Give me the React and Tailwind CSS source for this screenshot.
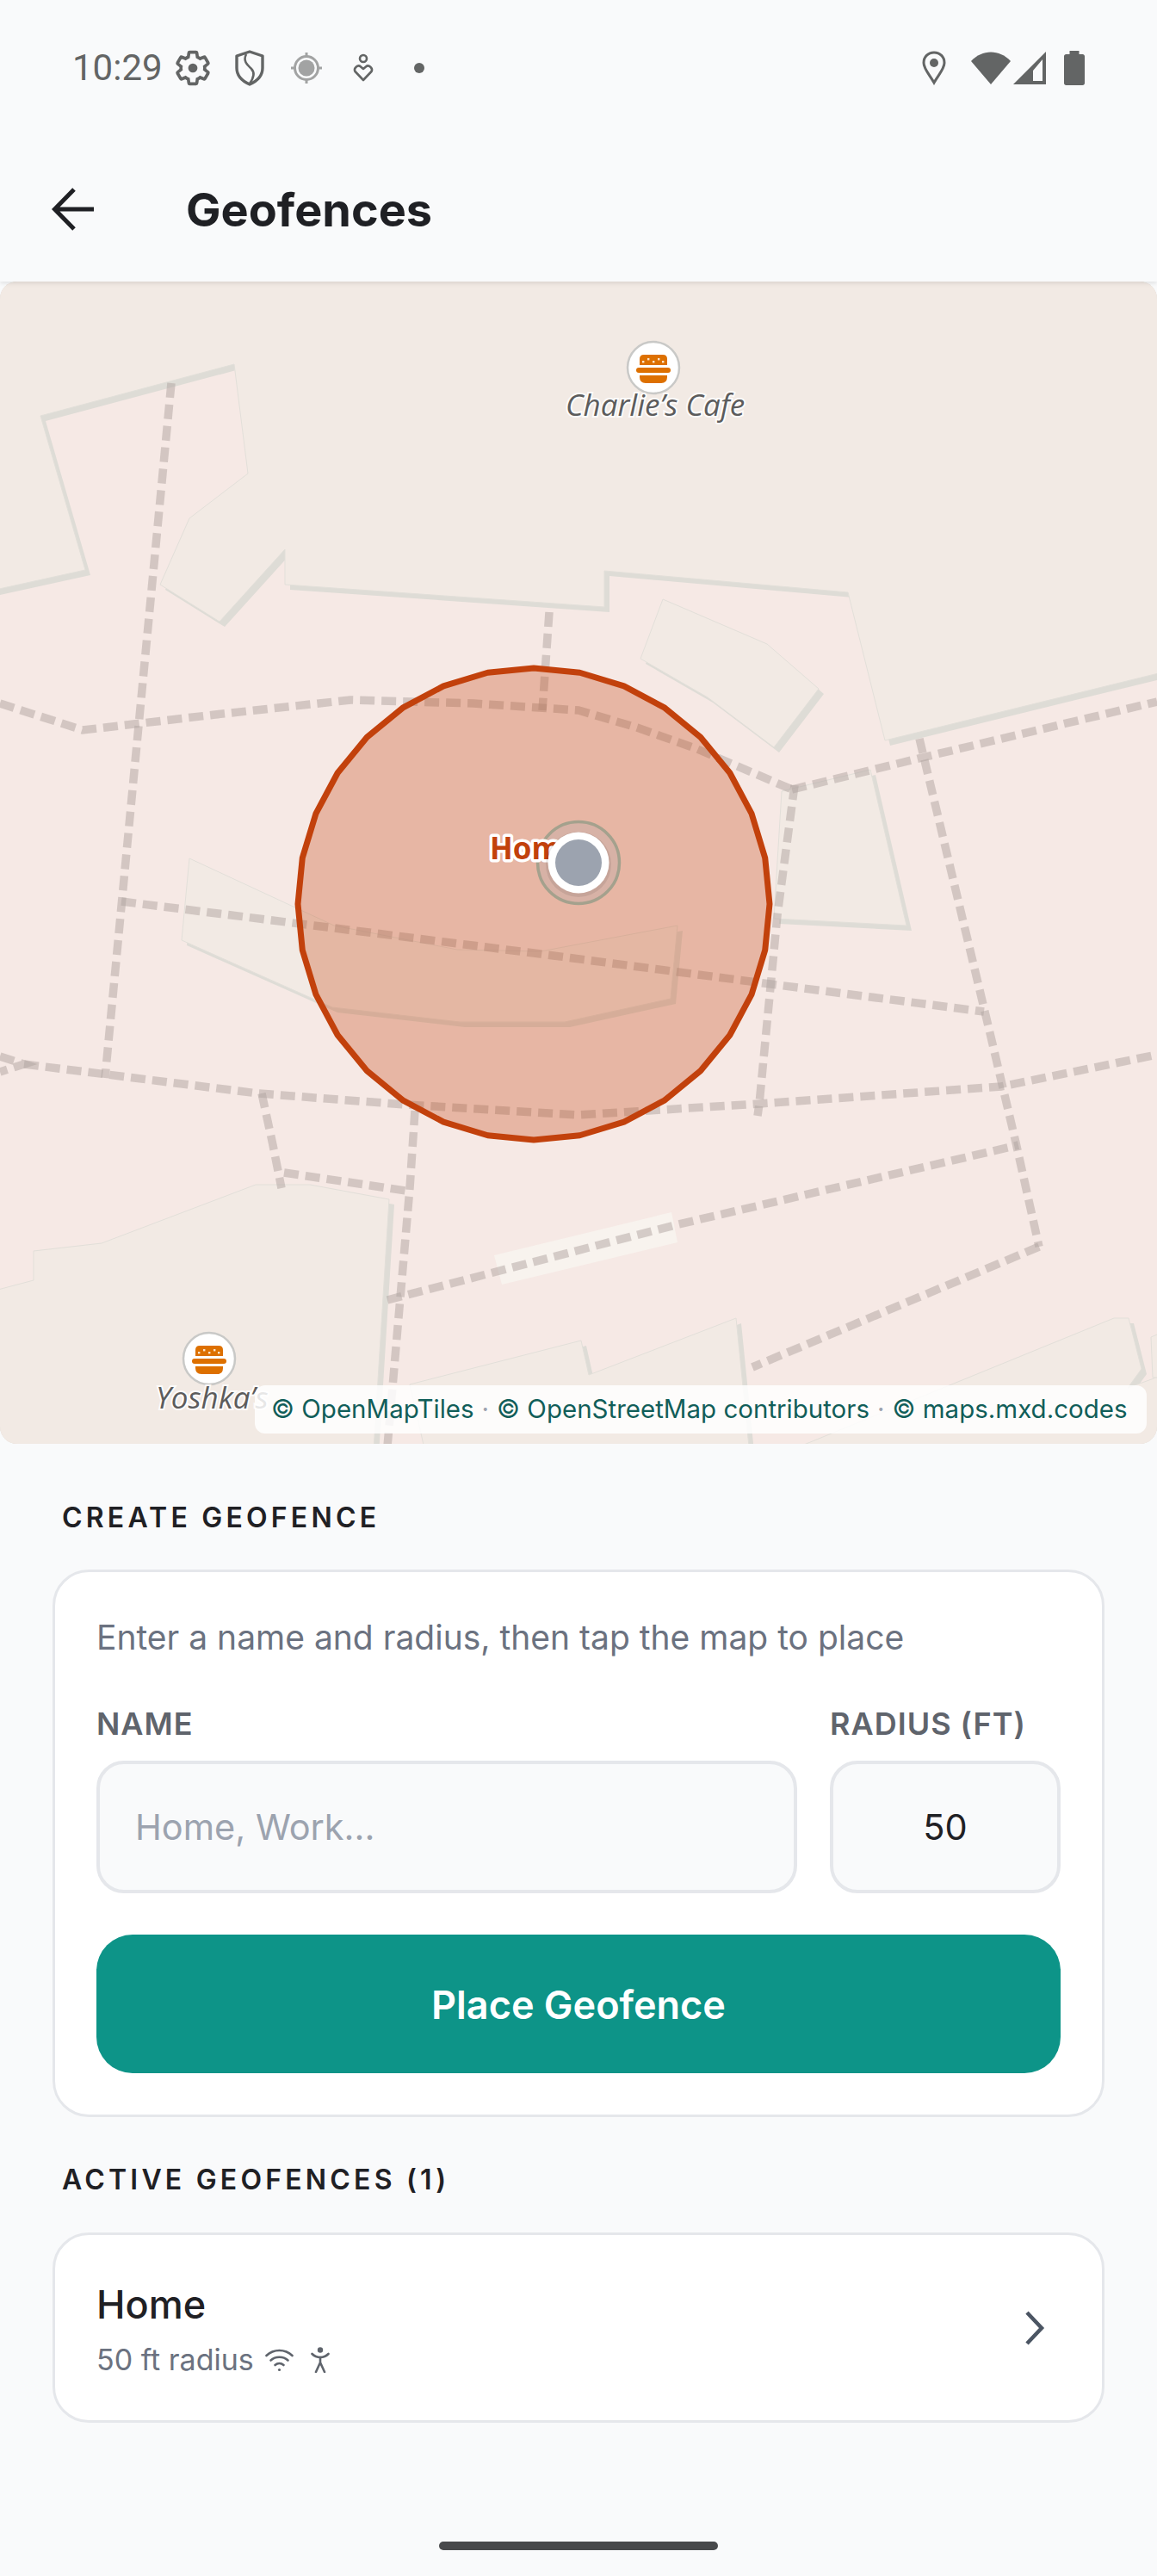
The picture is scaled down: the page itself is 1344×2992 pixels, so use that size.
import React from 'react';

// map shapes, in page pixels (the svg viewBox starts at the top of the map)
const landShapes = [
  '-10,317 1354,317 1354,780 1028,860 985,688 702,663 702,705 331,679 331,638 255,722 186,679 220,602 288,550 272,423 47,483 99,662 -10,686',
  '770,696 891,748 951,800 899,868 822,810 744,765',
  '908,919 1011,894 1053,1075 899,1067',
  '220,997 388,1075 531,1103 628,1105 787,1075 779,1160 656,1187 534,1187 386,1170 211,1092',
  '-10,1500 39,1487 39,1453 118,1444 297,1376 360,1376 452,1393 433,1700 -10,1700',
  '476,1608 675,1557 684,1597 855,1531 872,1700 497,1700',
  '880,1700 1294,1531 1311,1531 1326,1590 1310,1612 1354,1596 1354,1700',
  '1354,1546 1337,1553 1339,1600 1354,1600',
];

const roads = [
  '199,445 161,843 122,1252',
  '0,817 96,848 250,830 407,813 550,817 672,825 740,845 810,870 920,917',
  '920,917 1071,880 1344,815',
  '923,912 903,1063 882,1282 880,1296',
  '1068,858 1150,1200 1180,1327 1207,1448',
  '141,1047 628,1108 895,1143 1143,1175',
  '28,1236 300,1270 471,1283 672,1295 882,1282 1163,1262 1344,1225',
  '0,1227 28,1236 0,1245',
  '304,1270 317,1330 327,1380',
  '330,1362 471,1383',
  '482,1290 476,1380 450,1680',
  '450,1510 784,1423 1183,1330',
  '1207,1448 874,1588',
  '638,711 630,825',
];

const fencePoints = Array.from({ length: 32 }, (_, i) => {
  const a = (i * Math.PI) / 16;
  return `${620 + 274 * Math.sin(a)},${1050 - 274 * Math.cos(a)}`;
}).join(' ');

const Burger = ({ x, y }) => (
  <g transform={`translate(${x} ${y})`}>
    <circle r="30" fill="#fff" stroke="#c9c9c7" strokeWidth="2.5" />
    <path d="M-16 -3V-10Q-16 -15 -11 -15H11Q16 -15 16 -10V-3Z" fill="#dd7000" />
    <rect x="-20" y="0" width="40" height="6" rx="3" fill="#dd7000" />
    <path d="M-16 9H16V11Q16 18 9 18H-9Q-16 18 -16 11Z" fill="#dd7000" />
    <rect x="-13" y="-8" width="2.4" height="2.4" fill="#fbe3c8" />
    <rect x="-7" y="-11" width="2.4" height="2.4" fill="#fbe3c8" />
    <rect x="-1" y="-8" width="2.4" height="2.4" fill="#fbe3c8" />
    <rect x="5" y="-11" width="2.4" height="2.4" fill="#fbe3c8" />
    <rect x="10" y="-8" width="2.4" height="2.4" fill="#fbe3c8" />
  </g>
);

const MapLabel = ({ x, y, children }) => (
  <text
    x={x}
    y={y}
    fontFamily="'Open Sans', sans-serif"
    fontStyle="italic"
    fontSize="35"
    fill="#5c5c5c"
    stroke="#fff"
    strokeOpacity="0.85"
    strokeWidth="4"
    paintOrder="stroke"
  >
    {children}
  </text>
);

const MapView = () => (
  <div className="relative h-[1350px] overflow-hidden rounded-[20px] bg-[#f6e9e5]">
    <svg className="block h-[1350px] w-[1344px]" viewBox="0 327 1344 1350">
      <g fill="#dedcd6" transform="translate(6 6)">
        {landShapes.map((p) => (
          <polygon key={p} points={p} />
        ))}
      </g>
      <g fill="#f2eae4" stroke="#e2dfd9" strokeWidth="1">
        {landShapes.map((p) => (
          <polygon key={p} points={p} />
        ))}
      </g>
      <polygon points="574,1458 780,1408 787,1443 583,1492" fill="#f8f3ee" />
      <g fill="none" stroke="#b0a39f" strokeOpacity="0.5" strokeWidth="9.5" strokeDasharray="17 8">
        {roads.map((p) => (
          <polyline key={p} points={p} />
        ))}
      </g>

      <polygon points={fencePoints} fill="#c2410c" fillOpacity="0.3" stroke="#c2410c" strokeWidth="7" strokeLinejoin="round" />

      <circle cx="672" cy="1002" r="47.5" fill="#9ca3af" fillOpacity="0.2" stroke="#a4a18d" strokeWidth="3.5" />
      <text
        x="569"
        y="998"
        fontFamily="'Open Sans', sans-serif"
        fontWeight="700"
        fontSize="35"
        fill="#c2410c"
        stroke="#fff"
        strokeWidth="7"
        strokeLinejoin="round"
        paintOrder="stroke"
      >
        Home
      </text>
      <circle cx="672" cy="1004" r="38" fill="#000" fillOpacity="0.08" />
      <circle cx="672" cy="1002" r="35.5" fill="#fff" />
      <circle cx="672" cy="1002" r="27" fill="#9ca3af" />

      <Burger x={759} y={427} />
      <MapLabel x={657} y={483}>Charlie’s Cafe</MapLabel>
      <Burger x={243} y={1578} />
      <MapLabel x={181} y={1636}>Yoshka’s</MapLabel>
    </svg>

    <div className="absolute left-[296px] top-[1282px] flex h-[56px] w-[1036px] items-center gap-[9px] rounded-[12px] bg-white/85 pl-[19px] text-[29.5px] leading-none whitespace-nowrap text-[#115e59]">
      <span>© OpenMapTiles</span>
      <span className="text-[#9ca3af]">·</span>
      <span>© OpenStreetMap contributors</span>
      <span className="text-[#9ca3af]">·</span>
      <span>© maps.mxd.codes</span>
    </div>
  </div>
);

const StatusBar = () => (
  <div className="relative flex h-[158px] items-center pl-[84px] pr-[84px] text-[#636565]">
    <span className="font-['Roboto',sans-serif] text-[42px] leading-none">10:29</span>
    <svg className="ml-[12px] h-[46px] w-[46px]" viewBox="0 0 24 24" fill="none" stroke="#636565" strokeWidth="1.9">
      <path d="M19.14 12.94c.04-.3.06-.61.06-.94 0-.32-.02-.64-.07-.94l2.03-1.58c.18-.14.23-.41.12-.61l-1.92-3.32c-.12-.22-.37-.29-.59-.22l-2.39.96c-.5-.38-1.03-.7-1.62-.94l-.36-2.54c-.04-.24-.24-.41-.48-.41h-3.84c-.24 0-.43.17-.47.41l-.36 2.54c-.59.24-1.13.57-1.62.94l-2.39-.96c-.22-.08-.47 0-.59.22L2.74 8.87c-.12.21-.08.47.12.61l2.03 1.58c-.05.3-.09.63-.09.94s.02.64.07.94l-2.03 1.58c-.18.14-.23.41-.12.61l1.92 3.32c.12.22.37.29.59.22l2.39-.96c.5.38 1.03.7 1.62.94l.36 2.54c.05.24.24.41.48.41h3.84c.24 0 .44-.17.47-.41l.36-2.54c.59-.24 1.13-.56 1.62-.94l2.39.96c.22.08.47 0 .59-.22l1.92-3.32c.12-.22.07-.47-.12-.61l-2.01-1.58z" />
      <circle cx="12" cy="12" r="2.8" fill="#636565" stroke="none" />
    </svg>
    <svg className="ml-[26px] h-[42px] w-[34px]" viewBox="0 0 34 42" fill="none" stroke="#636565" strokeWidth="3.4" strokeLinejoin="round">
      <path d="M17 2L32 7V21C32 30 26 36 17 40C8 36 2 30 2 21V7Z" />
      <path d="M13 5C9 13 14 17 19 22C23 26 22 32 17 39" strokeWidth="2.6" />
    </svg>
    <svg className="ml-[30px] h-[38px] w-[38px]" viewBox="0 0 38 38" fill="none" stroke="#a2a3a3" strokeWidth="3">
      <circle cx="19" cy="19" r="13.5" />
      <circle cx="19" cy="19" r="9.5" fill="#a2a3a3" stroke="none" />
      <path d="M19 1V5M19 33V37M1 19H5M33 19H37" />
    </svg>
    <svg className="ml-[35px] h-[34px] w-[24px]" viewBox="0 0 24 34" fill="none" stroke="#636565" strokeWidth="2.6" strokeLinejoin="round">
      <circle cx="12" cy="6" r="4" />
      <path d="M12 31L2.5 21C0.5 17.5 5.5 12.5 9 15.5L12 18L15 15.5C18.5 12.5 23.5 17.5 21.5 21Z" />
    </svg>
    <span className="ml-[47px] h-[12px] w-[12px] rounded-full bg-[#636565]" />

    <div className="ml-auto flex items-center">
      <svg className="h-[40px] w-[28px]" viewBox="0 0 28 40" fill="none" stroke="#636565" strokeWidth="3">
        <path d="M14 37C9 28 2 21 2 14C2 7 7 2 14 2C21 2 26 7 26 14C26 21 19 28 14 37Z" />
        <circle cx="14" cy="14" r="5" fill="#636565" stroke="none" />
      </svg>
      <svg className="ml-[29px] h-[38px] w-[46px]" viewBox="0 0 46 38">
        <path d="M23 38L0 11C13 -3 33 -3 46 11Z" fill="#636565" />
      </svg>
      <svg className="ml-[3px] h-[38px] w-[38px]" viewBox="0 0 38 38">
        <path d="M38 0V38H0Z" fill="#636565" />
        <path d="M23 22L34 9V34H23Z" fill="#f9fafb" />
      </svg>
      <svg className="ml-[21px] h-[40px] w-[24px]" viewBox="0 0 24 40">
        <path d="M6.5 0H17.5V4H21.5C23 4 24 5 24 6.5V37.5C24 39 23 40 21.5 40H2.5C1 40 0 39 0 37.5V6.5C0 5 1 4 2.5 4H6.5Z" fill="#636565" />
      </svg>
    </div>
  </div>
);

const SectionLabel = ({ children }) => (
  <h2 className="pl-[11px] text-[32px] leading-[40px] font-semibold tracking-[4.2px] text-[#1f2024]">{children}</h2>
);

const App = () => {
  return (
    <div className="flex h-[2992px] w-[1344px] flex-col bg-[#f9fafb] font-['Inter',sans-serif]">
      <div className="relative z-10 bg-[#f9fafb] shadow-[0_2px_5px_rgba(0,0,0,0.1)]">
        <StatusBar />
        <header className="flex h-[169px] items-center pl-[60px]">
          <svg className="h-[50px] w-[50px]" viewBox="0 0 50 50" fill="none" stroke="#1f2024" strokeWidth="5">
            <path d="M49 25H4M26 2L3.5 25L26 48" />
          </svg>
          <h1 className="ml-[106px] pt-[2px] text-[54px] leading-none font-bold text-[#1f2024]">Geofences</h1>
        </header>
      </div>

      <MapView />

      <main className="px-[61px] pt-[66px]">
        <SectionLabel>CREATE GEOFENCE</SectionLabel>

        <section className="mt-[40px] rounded-[42px] border-[3px] border-[#e5e7eb] bg-white px-[48px] pt-[51px] pb-[48px]">
          <p className="text-[39px] leading-[50px] text-[#6b7280]">Enter a name and radius, then tap the map to place</p>

          <div className="mt-[55px] flex gap-[38px]">
            <div className="flex-1">
              <label className="block h-[40px] text-[36px] leading-[40px] font-semibold tracking-[1px] text-[#5f646c]">NAME</label>
              <input
                readOnly
                placeholder="Home, Work..."
                className="mt-[23px] h-[154px] w-full rounded-[32px] border-4 border-[#e5e7eb] bg-[#f9fafb] px-[41px] text-[41.5px] text-[#1f2024] outline-none placeholder:text-[#9ca3af]"
              />
            </div>
            <div className="w-[268px]">
              <label className="block h-[40px] text-[36px] leading-[40px] font-semibold tracking-[1px] whitespace-nowrap text-[#5f646c]">RADIUS (FT)</label>
              <input
                readOnly
                value="50"
                className="mt-[23px] h-[154px] w-full rounded-[32px] border-4 border-[#e5e7eb] bg-[#f9fafb] text-center text-[41.5px] text-[#1f2024] outline-none"
              />
            </div>
          </div>

          <button className="mt-[48px] h-[161px] w-full rounded-[42px] bg-[#0d9488] pt-[2px] text-[45px] font-semibold text-white">Place Geofence</button>
        </section>

        <div className="mt-[53px]">
          <SectionLabel>ACTIVE GEOFENCES (1)</SectionLabel>
        </div>

        <section className="mt-[41px] flex h-[221px] items-center justify-between rounded-[42px] border-[3px] border-[#e5e7eb] bg-white pr-[65px] pl-[48px]">
          <div className="pt-[5px]">
            <div className="text-[45px] leading-[56px] font-medium text-[#1f2024]">Home</div>
            <div className="mt-[14px] flex items-center text-[34px] leading-[44px] text-[#6b7280]">
              <span>50 ft radius</span>
              <svg className="ml-[13px] h-[27px] w-[33px]" viewBox="0 0 33 27" fill="none" stroke="#5f646c" strokeWidth="2.6" strokeLinecap="round">
                <path d="M1.5 8C10 0 23 0 31.5 8" />
                <path d="M6.5 13.5C12 8.5 21 8.5 26.5 13.5" />
                <path d="M11.5 19C14.5 16.5 18.5 16.5 21.5 19" />
                <circle cx="16.5" cy="24.5" r="1.6" fill="#5f646c" stroke="none" />
              </svg>
              <svg className="ml-[20px] h-[30px] w-[22px]" viewBox="0 0 22 30" fill="none" stroke="#5f646c" strokeWidth="2.6" strokeLinecap="round">
                <circle cx="11" cy="3.5" r="3.2" fill="#5f646c" stroke="none" />
                <path d="M1.5 8C4.5 11 8 12 11 12C14 12 17.5 11 20.5 8" />
                <path d="M11 12V18M11 18L6 29M11 18L16 29" />
              </svg>
            </div>
          </div>
          <svg className="h-[44px] w-[26px]" viewBox="0 0 26 44" fill="none" stroke="#4b5563" strokeWidth="4.5">
            <path d="M4 4L21 22L4 40" />
          </svg>
        </section>
      </main>

      <div className="mt-auto mb-[30px] h-[10px] w-[324px] self-center rounded-full bg-[#48494b]" />
    </div>
  );
};

export default App;
